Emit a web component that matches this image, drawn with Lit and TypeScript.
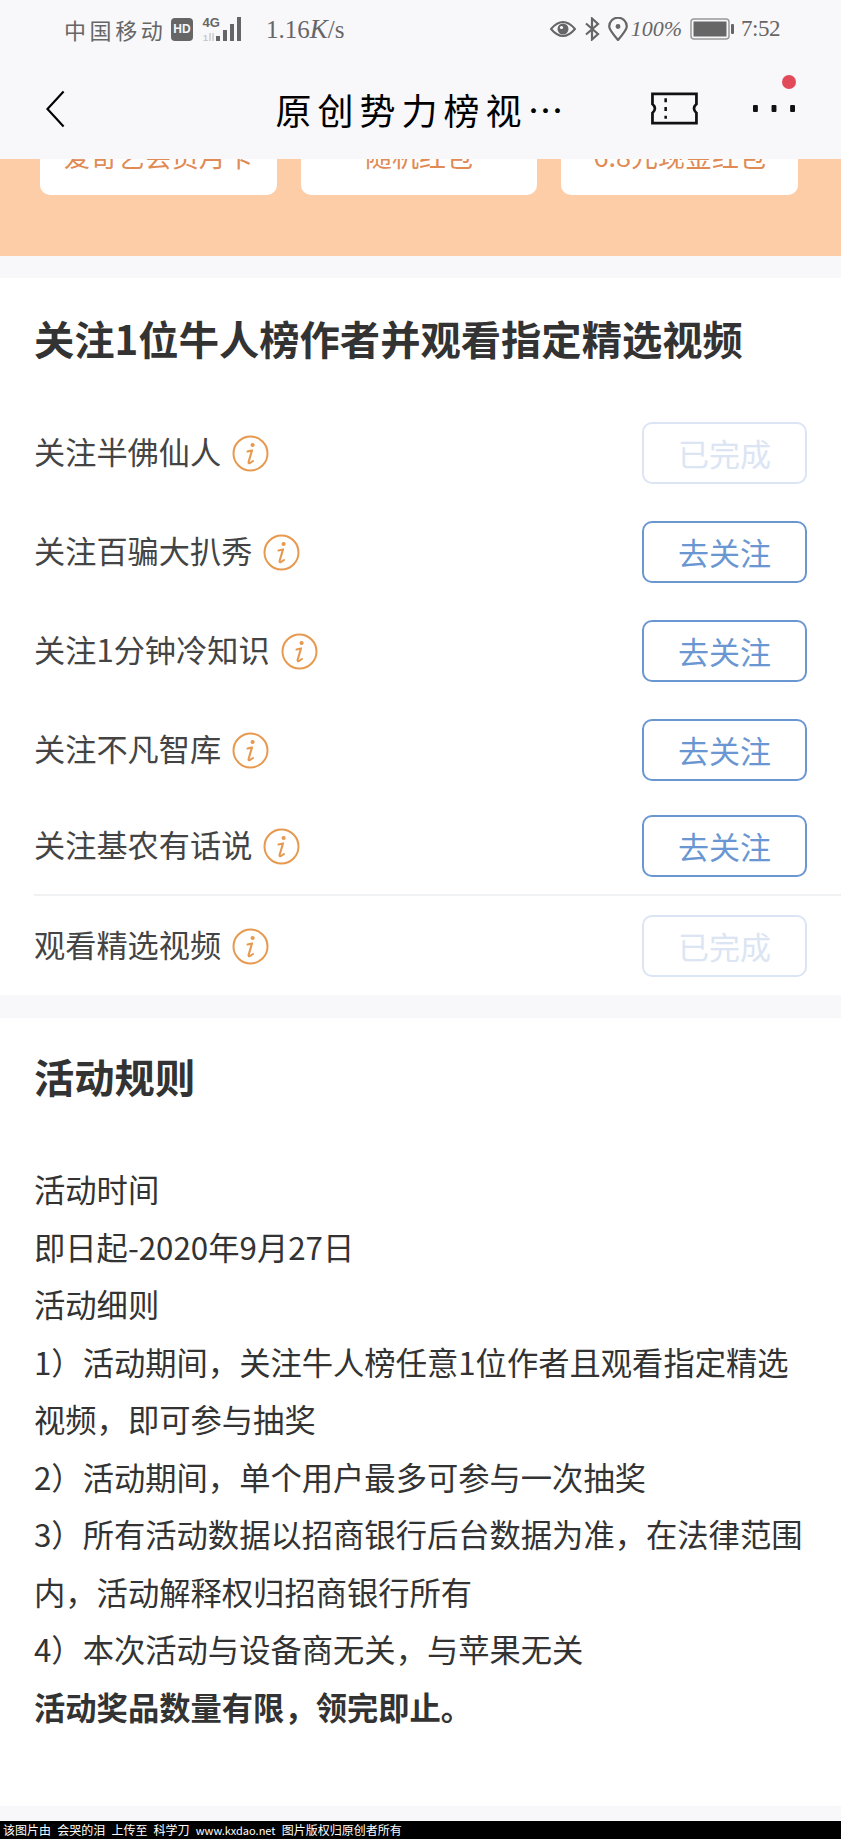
import { LitElement, html, css, svg } from 'lit';
import { customElement } from 'lit/decorators.js';

const infoIcon = svg`<svg class="info" viewBox="0 0 37 37" width="37" height="37">
  <circle cx="18.5" cy="18.5" r="17" fill="none" stroke="#e6994f" stroke-width="2"/>
  <circle cx="20.6" cy="10" r="2.1" fill="#e6994f"/>
  <path d="M15.5 16.4 L20 15.4 L16.6 27 Q16.4 28.8 18 28 L21 26" fill="none" stroke="#e6994f" stroke-width="2.1" stroke-linecap="round" stroke-linejoin="round"/>
</svg>`;

interface Task {
  name: string;
  done: boolean;
}

const follows: Task[] = [
  { name: '关注半佛仙人', done: true },
  { name: '关注百骗大扒秀', done: false },
  { name: '关注1分钟冷知识', done: false },
  { name: '关注不凡智库', done: false },
  { name: '关注基农有话说', done: false },
];

const rules = [
  '活动时间',
  '即日起-2020年9月27日',
  '活动细则',
  '1）活动期间，关注牛人榜任意1位作者且观看指定精选视频，即可参与抽奖',
  '2）活动期间，单个用户最多可参与一次抽奖',
  '3）所有活动数据以招商银行后台数据为准，在法律范围内，活动解释权归招商银行所有',
  '4）本次活动与设备商无关，与苹果无关',
];

@customElement('app-root')
export class AppRoot extends LitElement {
  static styles = css`
    :host {
      display: block;
      position: relative;
      width: 841px;
      height: 1839px;
      overflow: hidden;
      background: #f8f7fa;
      font-family: "Noto Sans CJK SC", "Noto Sans", sans-serif;
      color: #333;
    }
    .status {
      height: 58px;
      display: flex;
      align-items: center;
      justify-content: space-between;
      padding: 0 61px 0 64px;
      color: #666;
    }
    .status-group {
      display: flex;
      align-items: center;
    }
    .carrier {
      font-size: 22px;
      letter-spacing: 3.6px;
      margin-right: 4.6px;
    }
    .hd {
      width: 22px;
      height: 23px;
      border-radius: 4px;
      background: #666;
      color: #f8f7fa;
      font: bold 12px "Liberation Sans", sans-serif;
      display: flex;
      align-items: center;
      justify-content: center;
      margin-right: 9px;
    }
    .speed {
      font: 25px "Liberation Serif", serif;
      margin-left: 24px;
    }
    .speed i {
      font-size: 27px;
    }
    .percent {
      font: italic 22px "Liberation Serif", serif;
      margin: 0 8px 0 3px;
    }
    .time {
      font: 23px "Liberation Serif", serif;
      margin-left: 7px;
      letter-spacing: -0.5px;
    }
    .mr8 {
      margin-right: 8px;
    }
    .nav {
      position: relative;
      height: 101px;
      display: flex;
      align-items: center;
      padding: 0 46px;
      color: #000;
    }
    .nav-title {
      font-size: 36px;
      letter-spacing: 6px;
      margin-left: 211px;
      width: 330px;
      white-space: nowrap;
      line-height: 1;
    }
    .ticket {
      margin-left: 53px;
      margin-right: 55px;
    }
    .red-dot {
      position: absolute;
      left: 782px;
      top: 17px;
      width: 14px;
      height: 14px;
      border-radius: 50%;
      background: #e24a5a;
    }
    .banner {
      height: 97px;
      background: #fdcda8;
      overflow: hidden;
      padding: 0 43px 0 40px;
      display: grid;
      grid-template-columns: repeat(3, 1fr);
      column-gap: 24px;
      align-content: start;
    }
    .prize {
      height: 96px;
      margin-top: -60px;
      background: #fff;
      border-radius: 10px;
      color: #e08a55;
      font-size: 27px;
      text-align: center;
      line-height: 114px;
      white-space: nowrap;
    }
    .panel {
      background: #fff;
      margin-top: 22px;
    }
    .tasks {
      height: 717px;
      padding: 0 0 0 34px;
      box-sizing: border-box;
    }
    h2 {
      margin: 0;
      font-size: 40.3px;
      font-weight: 700;
      line-height: 60px;
      color: #333;
    }
    .tasks h2 {
      padding-top: 30px;
      margin-bottom: 54px;
    }
    .row {
      height: 62px;
      display: flex;
      align-items: center;
      padding-right: 34px;
      margin-bottom: 37px;
      font-size: 31.2px;
      color: #444;
    }
    .row > span {
      padding-bottom: 6px;
    }
    .row:nth-child(5) {
      margin-bottom: 34px;
    }
    .row.last {
      margin-bottom: 0;
    }
    .row .info {
      margin-left: 11px;
    }
    .btn {
      margin-left: auto;
      width: 165px;
      height: 62px;
      box-sizing: border-box;
      border: 2.5px solid #6a97d2;
      border-radius: 10px;
      padding-bottom: 2px;
      color: #6a97d2;
      display: flex;
      align-items: center;
      justify-content: center;
      font-size: 31px;
    }
    .btn.done {
      border-color: #dbe5f3;
      color: #dbe5f3;
    }
    .divider {
      height: 2px;
      background: #eff1f3;
      margin: 17px 0 19px;
    }
    .rules {
      height: 788px;
      margin-top: 23px;
      padding: 28px 34px 0 34px;
      box-sizing: border-box;
    }
    .rule-list {
      margin-top: 54px;
      font-size: 31.3px;
      line-height: 57.5px;
      color: #333;
    }
    .rule-list strong {
      font-weight: 700;
    }
    .watermark {
      position: absolute;
      left: 0;
      top: 1821px;
      width: 841px;
      height: 18px;
      background: #000;
      color: #fff;
      font: 12px/18px "Noto Sans CJK SC", sans-serif;
      padding-left: 3px;
      word-spacing: 3.5px;
      white-space: pre;
    }
    .watermark span {
      font-size: 11px;
    }
  `;

  private renderTask(t: Task, extra = '') {
    return html`<div class="row ${extra}">
      <span>${t.name}</span>${infoIcon}
      <div class="btn ${t.done ? 'done' : ''}">${t.done ? '已完成' : '去关注'}</div>
    </div>`;
  }

  render() {
    return html`
      <div class="status">
        <div class="status-group">
          <span class="carrier">中国移动</span>
          <span class="hd">HD</span>
          <svg width="40" height="26" viewBox="0 0 40 26">
            <text x="0.5" y="11" font-size="13" font-weight="700" font-family="Liberation Sans" fill="#666">4G</text>
            <text x="1" y="25" font-size="9" font-weight="700" font-family="Liberation Sans" fill="#c8c8c8">1</text>
            <path d="M8 17 V25 M11 25 V17" stroke="#c8c8c8" stroke-width="1.4"/>
            <rect x="14" y="20" width="4" height="5" fill="#666"/>
            <rect x="21" y="14" width="4" height="11" fill="#666"/>
            <rect x="28" y="8" width="4" height="17" fill="#666"/>
            <rect x="35" y="1" width="4" height="24" fill="#666"/>
          </svg>
          <span class="speed">1.16<i>K</i>/s</span>
        </div>
        <div class="status-group">
          <svg class="mr8" width="26" height="20" viewBox="0 0 26 20">
            <path d="M1 10 Q13 -4 25 10 Q13 24 1 10 Z" fill="none" stroke="#666" stroke-width="2"/>
            <circle cx="13" cy="10" r="5.5" fill="#666"/>
            <circle cx="11.5" cy="8.5" r="1.6" fill="#f8f7fa"/>
          </svg>
          <svg class="mr8" width="16" height="24" viewBox="0 0 16 24">
            <path d="M2 6.5 L14 17 L8 22.5 V1.5 L14 7 L2 17.5" fill="none" stroke="#666" stroke-width="2.2"/>
          </svg>
          <svg width="20" height="24" viewBox="0 0 20 24">
            <path d="M10 23 C4 16 1.2 12.5 1.2 9.5 A8.8 8.8 0 0 1 18.8 9.5 C18.8 12.5 16 16 10 23 Z" fill="none" stroke="#666" stroke-width="2.2"/>
            <circle cx="10" cy="9.5" r="2.4" fill="#666"/>
          </svg>
          <span class="percent">100%</span>
          <svg width="44" height="22" viewBox="0 0 44 22">
            <rect x="1" y="1" width="38" height="20" rx="3" fill="none" stroke="#999" stroke-width="1.5"/>
            <rect x="3.5" y="3.5" width="33" height="15" fill="#666"/>
            <rect x="41" y="6" width="3" height="10" rx="1" fill="#666"/>
          </svg>
          <span class="time">7:52</span>
        </div>
      </div>

      <div class="nav">
        <svg width="19" height="38" viewBox="0 0 19 38">
          <path d="M18 1 L1.5 19 L18 37" fill="none" stroke="#000" stroke-width="2.2"/>
        </svg>
        <span class="nav-title">原创势力榜视…</span>
        <svg class="ticket" width="48" height="33" viewBox="0 0 48 33">
          <path d="M1.5 1.5 H46.5 V12 Q41.5 16.5 46.5 21 V31.5 H1.5 V21 Q6.5 16.5 1.5 12 Z" fill="none" stroke="#111" stroke-width="2.8"/>
          <path d="M15 6 V27" stroke="#111" stroke-width="2.6" stroke-dasharray="4 5"/>
        </svg>
        <svg width="43" height="8" viewBox="0 0 43 8">
          <rect x="0" y="0" width="5" height="7" rx="1" fill="#111"/>
          <rect x="19" y="0" width="5" height="7" rx="1" fill="#111"/>
          <rect x="38" y="0" width="5" height="7" rx="1" fill="#111"/>
        </svg>
        <span class="red-dot"></span>
      </div>

      <div class="banner">
        <div class="prize">爱奇艺会员月卡</div>
        <div class="prize">随机红包</div>
        <div class="prize">6.8元现金红包</div>
      </div>

      <section class="panel tasks">
        <h2>关注1位牛人榜作者并观看指定精选视频</h2>
        ${follows.map((t, i) => this.renderTask(t, i === follows.length - 1 ? 'last' : ''))}
        <div class="divider"></div>
        ${this.renderTask({ name: '观看精选视频', done: true }, 'last')}
      </section>

      <section class="panel rules">
        <h2>活动规则</h2>
        <div class="rule-list">
          ${rules.map((r) => html`<div>${r}</div>`)}
          <div><strong>活动奖品数量有限，领完即止。</strong></div>
        </div>
      </section>

      <div class="watermark">该图片由 会哭的泪 上传至 科学刀 <span>www.kxdao.net</span> 图片版权归原创者所有</div>
    `;
  }
}
